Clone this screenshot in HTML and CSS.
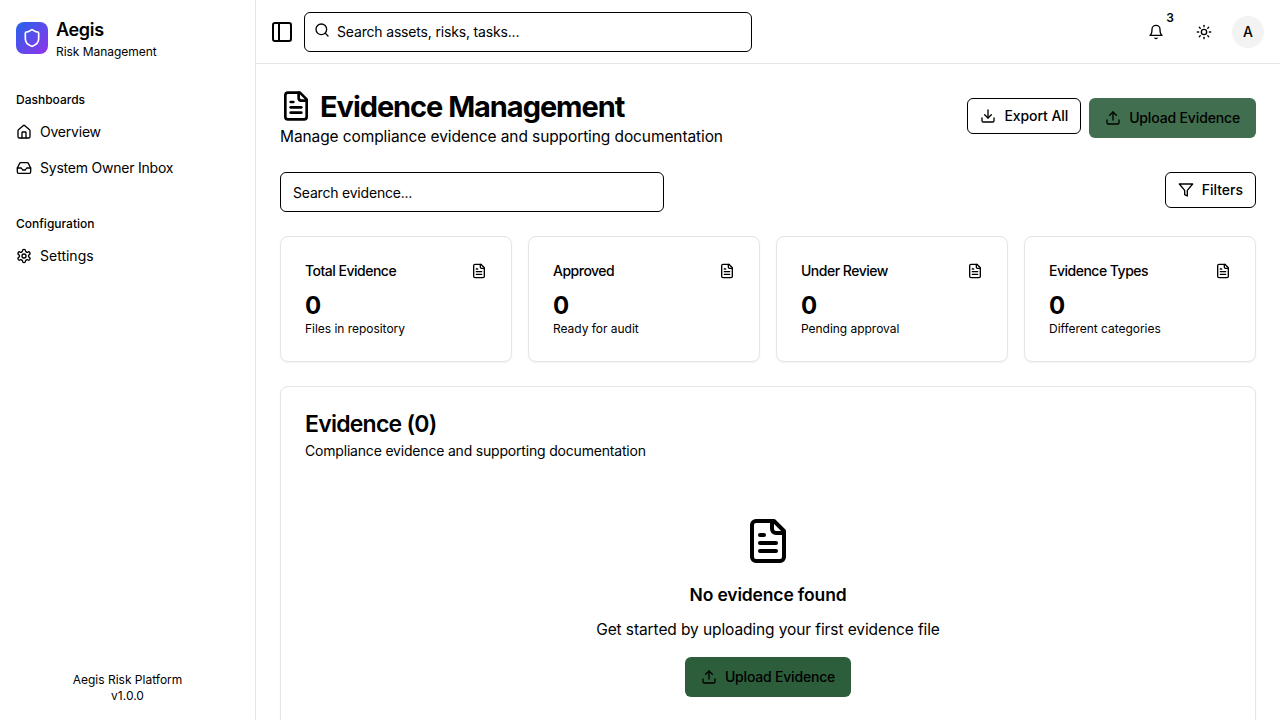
FILE: index.html
```html
<!DOCTYPE html>
<html lang="en">
<head>
<meta charset="utf-8">
<title>Aegis - Evidence Management</title>
<link rel="stylesheet" href="styles.css">
</head>
<body>
<svg class="sprite" xmlns="http://www.w3.org/2000/svg">
  <symbol id="file-text" viewBox="0 0 24 24"><path d="M15 2H6a2 2 0 0 0-2 2v16a2 2 0 0 0 2 2h12a2 2 0 0 0 2-2V7Z"/><path d="M14 2v4a2 2 0 0 0 2 2h4"/><path d="M10 9H8"/><path d="M16 13H8"/><path d="M16 17H8"/></symbol>
  <symbol id="upload" viewBox="0 0 24 24"><path d="M12 3v12"/><path d="m17 8-5-5-5 5"/><path d="M21 15v4a2 2 0 0 1-2 2H5a2 2 0 0 1-2-2v-4"/></symbol>
  <symbol id="download" viewBox="0 0 24 24"><path d="M12 15V3"/><path d="M21 15v4a2 2 0 0 1-2 2H5a2 2 0 0 1-2-2v-4"/><path d="m7 10 5 5 5-5"/></symbol>
  <symbol id="filter" viewBox="0 0 24 24"><path d="M22 3H2l8 9.46V19l4 2v-8.54L22 3z"/></symbol>
  <symbol id="shield" viewBox="0 0 24 24"><path d="M20 13c0 5-3.5 7.5-7.66 8.95a1 1 0 0 1-.67-.01C7.5 20.5 4 18 4 13V6a1 1 0 0 1 1-1c2 0 4.5-1.2 6.24-2.72a1.17 1.17 0 0 1 1.52 0C14.51 3.81 17 5 19 5a1 1 0 0 1 1 1z"/></symbol>
  <symbol id="house" viewBox="0 0 24 24"><path d="M15 21v-8a1 1 0 0 0-1-1h-4a1 1 0 0 0-1 1v8"/><path d="M3 10a2 2 0 0 1 .709-1.528l7-5.999a2 2 0 0 1 2.582 0l7 5.999A2 2 0 0 1 21 10v9a2 2 0 0 1-2 2H5a2 2 0 0 1-2-2z"/></symbol>
  <symbol id="inbox" viewBox="0 0 24 24"><path d="M22 12h-6l-2 3h-4l-2-3H2"/><path d="M5.45 5.11 2 12v6a2 2 0 0 0 2 2h16a2 2 0 0 0 2-2v-6l-3.45-6.89A2 2 0 0 0 16.76 4H7.24a2 2 0 0 0-1.79 1.11z"/></symbol>
  <symbol id="settings" viewBox="0 0 24 24"><path d="M12.22 2h-.44a2 2 0 0 0-2 2v.18a2 2 0 0 1-1 1.73l-.43.25a2 2 0 0 1-2 0l-.15-.08a2 2 0 0 0-2.73.73l-.22.38a2 2 0 0 0 .73 2.73l.15.1a2 2 0 0 1 1 1.72v.51a2 2 0 0 1-1 1.74l-.15.09a2 2 0 0 0-.73 2.73l.22.38a2 2 0 0 0 2.73.73l.15-.08a2 2 0 0 1 2 0l.43.25a2 2 0 0 1 1 1.73V20a2 2 0 0 0 2 2h.44a2 2 0 0 0 2-2v-.18a2 2 0 0 1 1-1.73l.43-.25a2 2 0 0 1 2 0l.15.08a2 2 0 0 0 2.73-.73l.22-.39a2 2 0 0 0-.73-2.73l-.15-.08a2 2 0 0 1-1-1.74v-.5a2 2 0 0 1 1-1.74l.15-.09a2 2 0 0 0 .73-2.73l-.22-.38a2 2 0 0 0-2.73-.73l-.15.08a2 2 0 0 1-2 0l-.43-.25a2 2 0 0 1-1-1.73V4a2 2 0 0 0-2-2z"/><circle cx="12" cy="12" r="3"/></symbol>
  <symbol id="panel-left" viewBox="0 0 24 24"><rect width="18" height="18" x="3" y="3" rx="2"/><path d="M9 3v18"/></symbol>
  <symbol id="search" viewBox="0 0 24 24"><circle cx="11" cy="11" r="8"/><path d="m21 21-4.3-4.3"/></symbol>
  <symbol id="bell" viewBox="0 0 24 24"><path d="M10.3 21a1.94 1.94 0 0 0 3.4 0"/><path d="M6 8a6 6 0 0 1 12 0c0 7 3 9 3 9H3s3-2 3-9"/></symbol>
  <symbol id="sun" viewBox="0 0 24 24"><circle cx="12" cy="12" r="4"/><path d="M12 2v2"/><path d="M12 20v2"/><path d="m4.93 4.93 1.41 1.41"/><path d="m17.66 17.66 1.41 1.41"/><path d="M2 12h2"/><path d="M20 12h2"/><path d="m6.34 17.66-1.41 1.41"/><path d="m19.07 4.93-1.41 1.41"/></symbol>
</svg>
<div class="app">
  <aside class="sidebar">
    <div class="brand">
      <div class="brand-logo"><svg class="icon icon-md"><use href="#shield"/></svg></div>
      <div>
        <div class="brand-name">Aegis</div>
        <div class="brand-sub">Risk Management</div>
      </div>
    </div>
    <nav class="nav">
      <div class="nav-group">
        <div class="nav-label">Dashboards</div>
        <div class="nav-items">
          <a class="nav-item"><svg class="icon"><use href="#house"/></svg>Overview</a>
          <a class="nav-item"><svg class="icon"><use href="#inbox"/></svg>System Owner Inbox</a>
        </div>
      </div>
      <div class="nav-group">
        <div class="nav-label">Configuration</div>
        <div class="nav-items">
          <a class="nav-item nav-item-wide"><svg class="icon"><use href="#settings"/></svg>Settings</a>
        </div>
      </div>
    </nav>
    <div class="side-footer"><div>Aegis Risk Platform</div><div>v1.0.0</div></div>
  </aside>
  <div class="content">
    <header class="topbar">
      <svg class="icon icon-lg"><use href="#panel-left"/></svg>
      <div class="global-search"><svg class="icon"><use href="#search"/></svg><span>Search assets, risks, tasks...</span></div>
      <div class="top-actions">
        <div class="icon-button"><svg class="icon"><use href="#bell"/></svg><span class="count">3</span></div>
        <div class="icon-button"><svg class="icon"><use href="#sun"/></svg></div>
        <div class="avatar">A</div>
      </div>
    </header>
    <main class="main">
      <div class="page-head">
        <div>
          <h1 class="page-title"><svg class="icon icon-xl"><use href="#file-text"/></svg><span>Evidence Management</span></h1>
          <p class="page-sub">Manage compliance evidence and supporting documentation</p>
        </div>
        <div class="head-actions">
          <button class="btn btn-outline btn-export"><svg class="icon"><use href="#download"/></svg>Export All</button>
          <button class="btn btn-primary btn-hover"><svg class="icon"><use href="#upload"/></svg>Upload Evidence</button>
        </div>
      </div>
      <div class="toolbar">
        <div class="search-box">Search evidence...</div>
        <button class="btn btn-outline btn-filter"><svg class="icon"><use href="#filter"/></svg>Filters</button>
      </div>
      <div class="stats">
        <div class="card stat"><div class="stat-head">Total Evidence<svg class="icon"><use href="#file-text"/></svg></div><div class="stat-value">0</div><div class="stat-note">Files in repository</div></div>
        <div class="card stat"><div class="stat-head">Approved<svg class="icon"><use href="#file-text"/></svg></div><div class="stat-value">0</div><div class="stat-note">Ready for audit</div></div>
        <div class="card stat"><div class="stat-head">Under Review<svg class="icon"><use href="#file-text"/></svg></div><div class="stat-value">0</div><div class="stat-note">Pending approval</div></div>
        <div class="card stat"><div class="stat-head">Evidence Types<svg class="icon"><use href="#file-text"/></svg></div><div class="stat-value">0</div><div class="stat-note">Different categories</div></div>
      </div>
      <section class="card list">
        <h2 class="list-title">Evidence (0)</h2>
        <p class="list-sub">Compliance evidence and supporting documentation</p>
        <div class="empty">
          <svg class="icon icon-2xl"><use href="#file-text"/></svg>
          <h3 class="empty-title">No evidence found</h3>
          <p class="empty-text">Get started by uploading your first evidence file</p>
          <button class="btn btn-primary"><svg class="icon"><use href="#upload"/></svg>Upload Evidence</button>
        </div>
      </section>
    </main>
  </div>
</div>
</body>
</html>
```
FILE: styles.css
```css
* { box-sizing: border-box; margin: 0; padding: 0; }
body { font-family: Inter, "Liberation Sans", sans-serif; font-size: 16px; line-height: 24px; color: #000; background: #fff; overflow: hidden; }
.sprite { display: none; }
.icon { width: 16px; height: 16px; flex: none; fill: none; stroke: currentColor; stroke-width: 2; stroke-linecap: round; stroke-linejoin: round; }
.icon-md { width: 20px; height: 20px; }
.icon-lg { width: 24px; height: 24px; }
.icon-xl { width: 32px; height: 32px; }
.icon-2xl { width: 48px; height: 48px; }

.app { display: flex; height: 720px; overflow: hidden; }
.sidebar { width: 256px; flex: none; display: flex; flex-direction: column; padding: 16px; border-right: 1px solid #e5e5e5; }
.brand { display: flex; align-items: center; gap: 8px; }
.brand-logo { width: 32px; height: 32px; display: flex; align-items: center; justify-content: center; border-radius: 8px; color: #fff; background: linear-gradient(to bottom right, #2563eb, #9333ea); }
.brand-name { font-size: 18px; line-height: 28px; font-weight: 600; letter-spacing: -0.3px; }
.brand-sub { font-size: 12px; line-height: 16px; letter-spacing: -0.04px; }
.nav { flex: 1; display: flex; flex-direction: column; gap: 24px; padding-top: 24px; }
.nav-label { font-size: 12px; line-height: 32px; font-weight: 500; }
.nav-items { display: flex; flex-direction: column; gap: 4px; }
.nav-item { display: flex; align-items: center; gap: 8px; height: 32px; font-size: 14px; letter-spacing: -0.22px; }
.nav-item-wide { letter-spacing: 0; }
.side-footer { text-align: center; font-size: 12px; line-height: 16px; }

.content { flex: 1; min-width: 0; }
.topbar { height: 64px; display: flex; align-items: center; gap: 10px; padding: 0 16px 0 14px; border-bottom: 1px solid #e5e5e5; }
.global-search { width: 448px; height: 40px; display: flex; gap: 7px; padding: 9px; border: 1px solid #000; border-radius: 6px; font-size: 14px; line-height: 20px; letter-spacing: -0.17px; }
.top-actions { margin-left: auto; display: flex; align-items: center; gap: 8px; }
.icon-button { position: relative; width: 40px; height: 40px; display: flex; align-items: center; justify-content: center; }
.count { position: absolute; top: -2px; right: 2px; font-size: 12px; line-height: 16px; font-weight: 600; }
.avatar { width: 32px; height: 32px; border-radius: 50%; background: #f3f3f3; text-align: center; font-size: 14px; line-height: 32px; font-weight: 500; }

.main { padding: 24px; display: flex; flex-direction: column; gap: 24px; }
.page-head { display: flex; align-items: center; justify-content: space-between; }
.page-title { display: flex; align-items: center; gap: 8px; font-size: 29px; line-height: 34px; height: 36px; font-weight: 700; letter-spacing: -1.06px; }
.page-title span { padding-top: 2px; }
.page-sub { height: 24px; font-size: 15.5px; line-height: 26px; letter-spacing: -0.1px; }
.head-actions { display: flex; align-items: flex-start; gap: 8px; }
.btn { display: inline-flex; align-items: center; gap: 8px; border: 0; border-radius: 6px; font: 500 14px/20px Inter, "Liberation Sans", sans-serif; letter-spacing: -0.15px; color: #000; white-space: nowrap; }
.btn-outline { height: 36px; padding: 0 12px; border: 1px solid #000; background: #fff; }
.btn-export { letter-spacing: -0.08px; }
.btn-filter { letter-spacing: 0; }
.btn-primary { height: 40px; padding: 0 16px; background: #2c5e3b; }
.btn-hover { background: #416e4e; }
.toolbar { display: flex; align-items: flex-start; justify-content: space-between; }
.search-box { width: 384px; height: 40px; padding: 10px 12px 8px; border: 1px solid #000; border-radius: 6px; font-size: 14px; line-height: 20px; letter-spacing: -0.2px; }

.card { border: 1px solid #e5e5e5; border-radius: 8px; padding: 24px; background: #fff; box-shadow: 0 1px 2px rgba(0, 0, 0, 0.05); }
.stats { display: grid; grid-template-columns: repeat(4, 1fr); gap: 16px; }
.stat-head { display: flex; align-items: center; justify-content: space-between; padding-bottom: 8px; font-size: 14px; line-height: 20px; font-weight: 500; letter-spacing: -0.5px; }
.stat-value { height: 32px; font-size: 24px; line-height: 34px; font-weight: 700; }
.stat-note { font-size: 12px; line-height: 16px; letter-spacing: -0.03px; }
.list-title { height: 24px; font-size: 23px; line-height: 26px; font-weight: 600; letter-spacing: -0.76px; margin-bottom: 6px; }
.list-sub { font-size: 14px; line-height: 20px; letter-spacing: -0.19px; }
.empty { display: flex; flex-direction: column; align-items: center; padding: 56px 0 32px; }
.empty-title { margin: 16px 0 8px; font-size: 17.5px; line-height: 28px; font-weight: 600; letter-spacing: -0.15px; }
.empty-text { height: 24px; font-size: 15.5px; line-height: 26px; margin-bottom: 16px; letter-spacing: -0.1px; }
.empty .btn { letter-spacing: -0.2px; }
```
